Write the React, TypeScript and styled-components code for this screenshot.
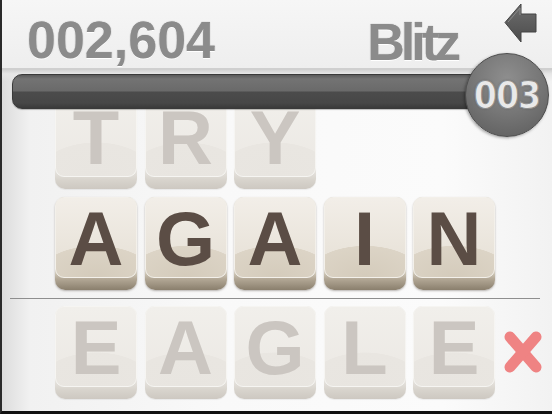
import React from 'react';
import styled, { createGlobalStyle } from 'styled-components';

const GlobalStyle = createGlobalStyle`
  html, body {
    margin: 0;
    padding: 0;
    background: #000;
  }
  #root {
    width: 552px;
    height: 414px;
    overflow: hidden;
  }
`;

type Word = { letters: string; faded?: boolean; wrong?: boolean };

const words: { top: Word; current: Word; guess: Word } = {
  top: { letters: 'TRY', faded: true },
  current: { letters: 'AGAIN' },
  guess: { letters: 'EAGLE', faded: true, wrong: true },
};

const BackArrow = () => (
  <svg width='34' height='42' viewBox='0 0 34 42'>
    <defs>
      <linearGradient id='arrowFill' x1='0' y1='0' x2='0' y2='1'>
        <stop offset='0' stopColor='#6e6e6e' />
        <stop offset='1' stopColor='#4c4c4c' />
      </linearGradient>
    </defs>
    <path
      d='M1 20.5 L17 2 L17 12 L32 12 L32 30 L17 30 L17 40 Z'
      fill='url(#arrowFill)'
      stroke='#444'
      strokeWidth='1'
      strokeLinejoin='round'
    />
    <path d='M4 20 L16 6 L16 13' stroke='#8a8a8a' strokeWidth='1' fill='none' />
  </svg>
);

const WrongMark = () => (
  <svg width='40' height='46' viewBox='0 0 40 46'>
    <g stroke='#ef8383' strokeWidth='11' strokeLinecap='round'>
      <line x1='7' y1='8' x2='33' y2='38' />
      <line x1='33' y1='8' x2='7' y2='38' />
    </g>
  </svg>
);

const Tile: React.FC<{ letter: string; faded?: boolean }> = ({ letter, faded }) => (
  <TileBody $faded={faded}>
    <TileFace $faded={faded}>{letter}</TileFace>
  </TileBody>
);

const WordRow: React.FC<{ word: Word }> = ({ word }) => (
  <Row>
    {word.letters.split('').map((l, i) => (
      <Tile key={i} letter={l} faded={word.faded} />
    ))}
    {word.wrong && (
      <Mark>
        <WrongMark />
      </Mark>
    )}
  </Row>
);

const App: React.FC = () => {
  return (
    <>
      <GlobalStyle />
      <Screen>
        <Header>
          <Score>002,604</Score>
          <HeaderRight>
            <Mode>Blitz</Mode>
            <BackButton>
              <BackArrow />
            </BackButton>
          </HeaderRight>
        </Header>
        <BarArea>
          <Bar />
          <Counter>003</Counter>
        </BarArea>
        <Board>
          <WordRow word={words.top} />
          <WordRow word={words.current} />
          <Divider />
          <WordRow word={words.guess} />
        </Board>
      </Screen>
    </>
  );
};

const Screen = styled.div`
  width: 550px;
  height: 411px;
  border-left: 2px solid #2a2a2a;
  border-bottom: 3px solid #111;
  display: flex;
  flex-direction: column;
  overflow: hidden;
  background:
    linear-gradient(90deg, #dcdcdc 0%, #f1f1f1 5%, #f9f9f9 40%, #fbfbfb 80%, #f2f2f2 100%);
  font-family: 'Liberation Sans', Arial, sans-serif;
`;

const Header = styled.div`
  height: 70px;
  flex: none;
  display: flex;
  align-items: center;
  justify-content: space-between;
  padding-left: 25px;
  box-sizing: border-box;
  background: linear-gradient(180deg, #f6f6f6 0%, #eeeeee 100%);
  border-bottom: 2px solid #cfcfcf;
  position: relative;
  z-index: 2;
`;

const Score = styled.div`
  font-size: 52px;
  font-weight: 700;
  color: #8b8b8b;
  text-shadow: 0 1px 0 #ffffff, 0 0 1px #777;
  margin-top: 12px;
`;

const HeaderRight = styled.div`
  display: flex;
  align-items: flex-start;
  align-self: stretch;
`;

const Mode = styled.div`
  font-size: 52px;
  font-weight: 700;
  color: #8b8b8b;
  letter-spacing: -4px;
  text-shadow: 0 1px 0 #ffffff, 0 0 1px #777;
  margin-top: 12px;
  margin-right: 47px;
`;

const BackButton = styled.div`
  margin-top: 2px;
  margin-right: 14px;
  display: flex;
`;

const BarArea = styled.div`
  height: 38px;
  flex: none;
  padding: 4px 50px 0 10px;
  box-sizing: border-box;
  background: linear-gradient(180deg, #d3d3d3 0%, #e6e6e6 10%, rgba(240, 240, 240, 0) 30%);
  position: relative;
  z-index: 2;
`;

const Bar = styled.div`
  height: 35px;
  border-radius: 10px;
  border: 1px solid #3a3a3a;
  box-sizing: border-box;
  background: linear-gradient(
    180deg,
    #5a5a5a 0%,
    #737373 12%,
    #6a6a6a 48%,
    #4b4b4b 52%,
    #474747 85%,
    #3a3a3a 100%
  );
  box-shadow: 0 1px 1px rgba(0, 0, 0, 0.25);
`;

const Counter = styled.div`
  position: absolute;
  left: 463px;
  top: -17px;
  width: 84px;
  height: 84px;
  border-radius: 50%;
  box-sizing: border-box;
  border: 1px solid #4c4c4c;
  background: radial-gradient(circle at 50% 30%, #8e8e8e 0%, #767676 50%, #5a5a5a 100%);
  box-shadow: -1px 1px 3px rgba(0, 0, 0, 0.35);
  display: flex;
  align-items: center;
  justify-content: center;
  font-family: 'DejaVu Sans Condensed', 'DejaVu Sans', sans-serif;
  font-size: 37px;
  font-weight: 700;
  letter-spacing: -1px;
  color: #e9e9e9;
  -webkit-text-stroke: 1px #8c8c8c;
  text-shadow: 0 0 2px #555;
  padding-top: 1px;
`;

const Board = styled.div`
  margin-top: -12px;
  padding: 0 12px 0 6px;
  display: flex;
  flex-direction: column;
  gap: 8px;
  position: relative;
  z-index: 1;
`;

const Row = styled.div`
  display: flex;
  align-items: center;
  gap: 7.5px;
  padding-left: 47px;
  height: 93px;
`;

const TileBody = styled.div<{ $faded?: boolean }>`
  width: 82px;
  height: 93px;
  flex: none;
  box-sizing: border-box;
  border-radius: 10px;
  padding-bottom: 12px;
  background: ${({ $faded }) =>
    $faded
      ? 'linear-gradient(180deg, #e4e1dc 0%, #e4e1dc 82%, #d8d4cd 90%, #cdc8c1 100%)'
      : 'linear-gradient(180deg, #cfc7b8 0%, #cfc7b8 82%, #b3a896 88%, #8a7f6d 100%)'};
  box-shadow: ${({ $faded }) =>
    $faded ? '0 1px 1px rgba(0,0,0,0.06)' : '0 1px 2px rgba(60, 50, 40, 0.35)'};
`;

const TileFace = styled.div<{ $faded?: boolean }>`
  height: 100%;
  box-sizing: border-box;
  border-radius: 9px;
  border: 1.5px solid ${({ $faded }) => ($faded ? '#f6f5f2' : '#f3f0ea')};
  background: ${({ $faded }) =>
    $faded
      ? 'radial-gradient(ellipse 120% 70% at 50% 100%, #e8e5e0 0%, #e9e6e1 60%, rgba(0,0,0,0) 61%), linear-gradient(180deg, #f1efeb 0%, #ebe8e3 100%)'
      : 'radial-gradient(ellipse 120% 65% at 50% 100%, #d4cbbb 0%, #dcd4c6 60%, rgba(0,0,0,0) 61%), linear-gradient(180deg, #f2eee8 0%, #e5dfd4 100%)'};
  display: flex;
  align-items: center;
  justify-content: center;
  font-family: 'Liberation Sans', Arial, sans-serif;
  font-size: 76px;
  font-weight: 700;
  line-height: 1;
  color: ${({ $faded }) => ($faded ? '#cbc6c1' : '#5b4d45')};
  padding-top: 3px;
`;

const Divider = styled.div`
  height: 1px;
  background: #8e8e8e;
  margin: 0 0 -1px 2px;
`;

const Mark = styled.div`
  margin-left: 0.5px;
  display: flex;
  margin-top: -1px;
`;

export default App;
